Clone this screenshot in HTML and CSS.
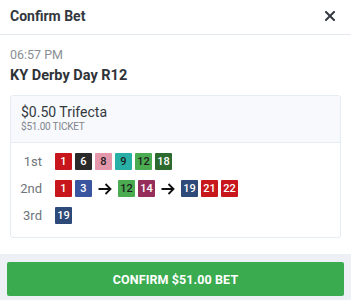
FILE: index.html
```html
<!DOCTYPE html>
<html>
<head>
<meta charset="utf-8">
<link rel="stylesheet" href="styles.css">
</head>
<body>
<div class="page">
  <header class="topbar">
    <span class="title">Confirm Bet</span>
    <svg class="close" width="10" height="10" viewBox="0 0 10 10"><path d="M1 1L9 9M9 1L1 9" stroke="#333840" stroke-width="2" stroke-linecap="square"/></svg>
  </header>
  <main class="content">
    <div class="time">06:57 PM</div>
    <div class="race">KY Derby Day R12</div>
    <section class="card">
      <div class="card-head">
        <div class="bet">$0.50 Trifecta</div>
        <div class="ticket">$51.00 TICKET</div>
      </div>
      <div class="card-body">
        <div class="row">
          <span class="pos">1st</span>
          <div class="runners">
            <span class="rn c1">1</span><span class="rn c6">6</span><span class="rn c8">8</span><span class="rn c9">9</span><span class="rn c12">12</span><span class="rn c18">18</span>
          </div>
        </div>
        <div class="row">
          <span class="pos">2nd</span>
          <div class="runners">
            <span class="rn c1">1</span><span class="rn c3">3</span>
            <svg class="arrow" width="14" height="12" viewBox="0 0 14 12"><path d="M0.5 6H12.5M7.5 1L12.5 6L7.5 11" fill="none" stroke="#111" stroke-width="1.8"/></svg>
            <span class="rn c12">12</span><span class="rn c14">14</span>
            <svg class="arrow" width="14" height="12" viewBox="0 0 14 12"><path d="M0.5 6H12.5M7.5 1L12.5 6L7.5 11" fill="none" stroke="#111" stroke-width="1.8"/></svg>
            <span class="rn c19">19</span><span class="rn c1">21</span><span class="rn c1">22</span>
          </div>
        </div>
        <div class="row">
          <span class="pos">3rd</span>
          <div class="runners">
            <span class="rn c19">19</span>
          </div>
        </div>
      </div>
    </section>
  </main>
  <footer class="footer">
    <button class="confirm">CONFIRM $51.00 BET</button>
  </footer>
</div>
</body>
</html>
```
FILE: styles.css
```css
html, body {
  margin: 0;
  padding: 0;
  background: #ffffff;
}
body {
  font-family: Roboto, "Liberation Sans", sans-serif;
  color: #33383e;
}
.page {
  height: 300px;
  display: flex;
  flex-direction: column;
}
.topbar {
  height: 34px;
  border-bottom: 1px solid #e4e9f1;
  display: flex;
  align-items: center;
  justify-content: space-between;
  padding: 0 16px 0 10px;
}
.title {
  font-size: 14px;
  font-weight: 700;
  color: #33383e;
  margin-top: -3px;
}
.close {
  display: block;
  margin-top: -3px;
}
.content {
  padding: 12px 10px 0 10px;
}
.time {
  font-size: 12.5px;
  line-height: 16px;
  color: #8a8e94;
}
.race {
  font-size: 14.5px;
  font-weight: 700;
  line-height: 20px;
  margin-top: 3px;
  color: #2f3338;
}
.card {
  margin-top: 9px;
  border: 1px solid #e6ecf4;
  border-radius: 3px;
  overflow: hidden;
}
.card-head {
  background: #f7f9fc;
  border-bottom: 1px solid #e6ecf4;
  padding: 8px 10px 9px 10px;
}
.bet {
  font-size: 14px;
  line-height: 17px;
  color: #33383e;
}
.ticket {
  font-size: 10px;
  line-height: 12px;
  color: #80858c;
  letter-spacing: -0.2px;
}
.card-body {
  padding: 10px 0 13px 0;
  display: flex;
  flex-direction: column;
  gap: 10px;
}
.row {
  display: flex;
  align-items: center;
  height: 17px;
}
.pos {
  width: 31px;
  text-align: right;
  font-size: 13px;
  color: #6f747b;
  margin-right: 13px;
}
.runners {
  display: flex;
  align-items: center;
  gap: 3px;
}
.rn {
  display: inline-flex;
  align-items: center;
  justify-content: center;
  min-width: 17px;
  height: 17px;
  box-sizing: border-box;
  padding: 0 1px;
  font-size: 11px;
  font-weight: 500;
  color: #ffffff;
  border-radius: 1px;
}
.arrow {
  display: block;
  margin: 0 3px;
}
.c1 { background: #c8161d; }
.c3 { background: #3a55a0; }
.c6 { background: #2a2a2a; }
.c8 { background: #e496ab; color: #1d1d1d; }
.c9 { background: #28b0a6; color: #1d1d1d; }
.c12 { background: #4bab51; color: #1d1d1d; }
.c14 { background: #952e5b; }
.c18 { background: #2c6a30; }
.c19 { background: #2d4a78; }
.footer {
  margin-top: auto;
  background: #edf0f5;
  padding: 8px 7px 4px 7px;
}
.confirm {
  display: block;
  width: 100%;
  height: 34px;
  border: none;
  border-radius: 2px;
  background: #3aab4f;
  color: #ffffff;
  font-family: Roboto, "Liberation Sans", sans-serif;
  font-size: 12.5px;
  font-weight: 700;
  letter-spacing: 0.1px;
}
```
